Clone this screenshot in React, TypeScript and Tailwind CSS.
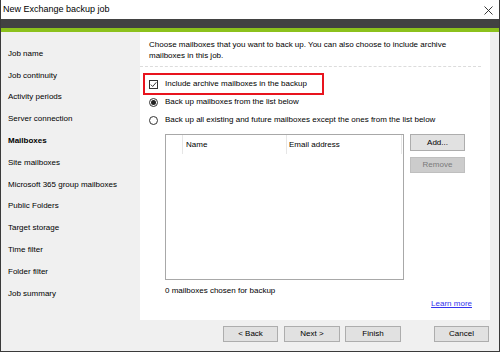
import React from "react";

const font = { fontFamily: '"Liberation Sans", Arial, sans-serif' };

const navItems = [
  "Job name",
  "Job continuity",
  "Activity periods",
  "Server connection",
  "Mailboxes",
  "Site mailboxes",
  "Microsoft 365 group mailboxes",
  "Public Folders",
  "Target storage",
  "Time filter",
  "Folder filter",
  "Job summary",
];

function Btn({ children, className = "" }: { children: React.ReactNode; className?: string }) {
  return (
    <div
      className={`h-[16px] flex items-center justify-center border border-[#adadad] bg-[#e1e1e1] text-[8px] text-black ${className}`}
    >
      {children}
    </div>
  );
}

export default function App() {
  return (
    <div
      className="w-[500px] h-[352px] flex flex-col border-x border-b border-[#3a3a3a] bg-[#f0f0f0] text-black overflow-hidden"
      style={font}
    >
      {/* Title bar */}
      <div className="h-[19px] shrink-0 bg-white flex items-center justify-between pl-[2px] pr-[6px]">
        <span className="text-[9px] leading-none">New Exchange backup job</span>
        <svg width="9" height="9" viewBox="0 0 9 9" className="mt-[1px]">
          <path d="M0.5 0.5 L8.5 8.5 M8.5 0.5 L0.5 8.5" stroke="#222" strokeWidth="0.9" fill="none" />
        </svg>
      </div>
      <div className="h-[9px] shrink-0 bg-[#424242]" />
      <div className="h-[4px] shrink-0 bg-[#8cc11c]" />

      {/* Body */}
      <div className="flex flex-1 min-h-0">
        {/* Sidebar */}
        <div className="w-[139px] shrink-0 bg-[#f0f0f0] pt-[11px] pl-[7px]">
          {navItems.map((item) => (
            <div
              key={item}
              className={`h-[21.8px] flex items-center text-[8px] ${item === "Mailboxes" ? "font-bold" : ""}`}
            >
              {item}
            </div>
          ))}
        </div>

        {/* Right column */}
        <div className="flex-1 flex flex-col">
          <div className="h-[288px] w-[350px] bg-white flex flex-col pt-[7px]">
            <div className="pl-[9px] text-[8px] leading-[11px]">
              <div>Choose mailboxes that you want to back up. You can also choose to include archive</div>
              <div>mailboxes in this job.</div>
            </div>
            <div className="mt-[5px] mr-[9px] border-t border-dashed border-[#dcdcdc]" />

            {/* Red highlighted checkbox */}
            <div className="mt-[6px] ml-[3px] w-[181px] h-[22px] border-2 border-[#e8141e] flex items-center pl-[4px]">
              <div className="w-[9px] h-[9px] border border-[#333] bg-white flex items-center justify-center">
                <svg width="7" height="7" viewBox="0 0 7 7">
                  <path d="M0.8 3.6 L2.7 5.5 L6.3 1.3" stroke="#222" strokeWidth="0.9" fill="none" />
                </svg>
              </div>
              <span className="ml-[7px] text-[8px] leading-none">Include archive mailboxes in the backup</span>
            </div>

            {/* Radios */}
            <div className="h-[14px] flex items-center pl-[9px]">
              <div className="w-[9px] h-[9px] rounded-full border border-[#333] bg-white flex items-center justify-center">
                <div className="w-[5px] h-[5px] rounded-full bg-[#222]" />
              </div>
              <span className="ml-[7px] text-[8px] leading-none">Back up mailboxes from the list below</span>
            </div>
            <div className="mt-[4px] h-[14px] flex items-center pl-[9px]">
              <div className="w-[9px] h-[9px] rounded-full border border-[#333] bg-white" />
              <span className="ml-[7px] text-[8px] leading-none">
                Back up all existing and future mailboxes except the ones from the list below
              </span>
            </div>

            {/* List + buttons */}
            <div className="mt-[7px] ml-[25px] flex items-start">
              <div className="w-[239px] h-[146px] border border-[#a8a8a8] bg-white">
                <div className="h-[19px] flex text-[8px]">
                  <div className="w-[17px] border-r border-[#e6e6e6]" />
                  <div className="w-[104px] border-r border-[#e6e6e6] flex items-center pl-[3px]">Name</div>
                  <div className="w-[115px] border-r border-[#e6e6e6] flex items-center pl-[2px]">Email address</div>
                </div>
              </div>
              <div className="ml-[6px] flex flex-col">
                <Btn className="w-[55px] h-[17px]">Add...</Btn>
                <div className="mt-[6px] w-[55px] h-[16px] flex items-center justify-center border border-[#bfbfbf] bg-[#cccccc] text-[8px] text-[#7a7a7a]">
                  Remove
                </div>
              </div>
            </div>

            <div className="mt-[5px] pl-[25px] text-[8px] leading-[11px]">0 mailboxes chosen for backup</div>
            <div className="mt-[2px] flex justify-end pr-[18px]">
              <span className="text-[8px] leading-[11px] text-[#3333ee] underline">Learn more</span>
            </div>
          </div>

          {/* Bottom buttons */}
          <div className="flex-1 flex items-start pt-[6px]">
            <Btn className="ml-[83px] w-[55px]">&lt; Back</Btn>
            <Btn className="ml-[6px] w-[56px] border-[#0078d7] border-[1.5px]">Next &gt;</Btn>
            <Btn className="ml-[5px] w-[56px]">Finish</Btn>
            <Btn className="ml-[33px] w-[55px]">Cancel</Btn>
          </div>
        </div>
      </div>
    </div>
  );
}
